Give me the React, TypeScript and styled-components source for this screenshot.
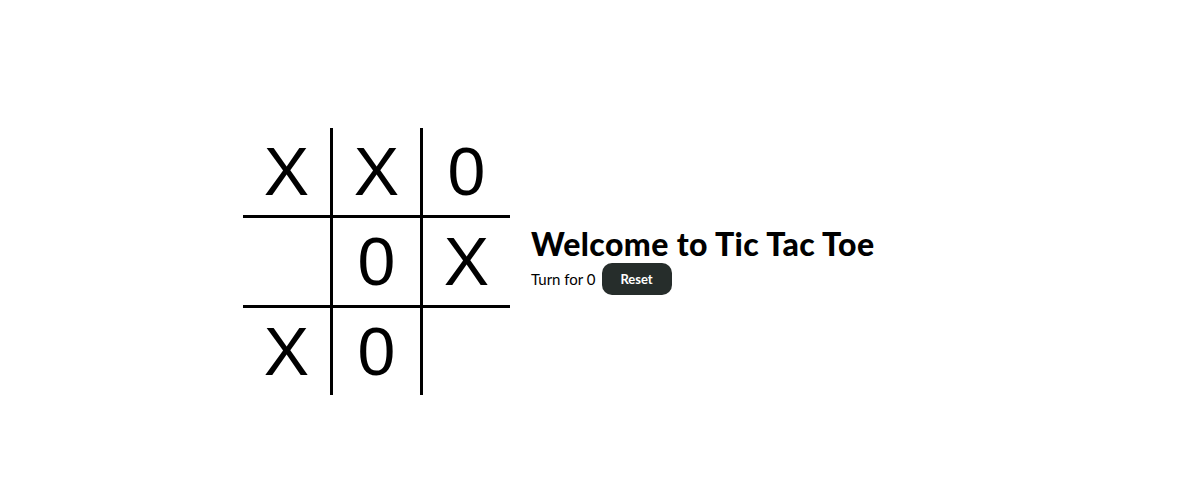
import React, { useState } from "react";
import styled, { createGlobalStyle } from "styled-components";

const GlobalStyle = createGlobalStyle`
    body {
        margin: 0;
        background: #fff;
        font-family: "Lato", "Noto Sans", sans-serif;
    }
`

const inicial = ["X", "X", "0", "", "0", "X", "X", "0", ""];

const App = () => {
    const [casillas, setCasillas] = useState<string[]>(inicial);
    const [turno, setTurno] = useState<string>("0");

    const jugar = (i: number) => {
        if (casillas[i]) return;
        const nuevas = [...casillas];
        nuevas[i] = turno;
        setCasillas(nuevas);
        setTurno(turno === "X" ? "0" : "X");
    }

    return (
        <>
            <GlobalStyle />
            <Pagina>
                <Tablero>
                    {casillas.map((valor, i) => (
                        <Casilla key={i} $col={i % 3} $fila={Math.floor(i / 3)} onClick={() => jugar(i)}>
                            {valor}
                        </Casilla>
                    ))}
                </Tablero>
                <Panel>
                    <Titulo>Welcome to Tic Tac Toe</Titulo>
                    <Fila>
                        <Turno>Turn for {turno}</Turno>
                        <BotonReset onClick={() => { setCasillas(Array(9).fill("")); setTurno("X"); }}>Reset</BotonReset>
                    </Fila>
                </Panel>
            </Pagina>
        </>
    )
}

export default App;

const Pagina = styled.div`
    display: flex;
    align-items: center;
    height: 522px;
    padding-left: 243px;
    box-sizing: border-box;
`

const Tablero = styled.div`
    display: grid;
    grid-template-columns: 90px 90px 87px;
    grid-template-rows: 90px 90px 87px;
`

const Casilla = styled.div<{ $col: number; $fila: number }>`
    display: flex;
    justify-content: center;
    align-items: center;
    box-sizing: border-box;
    font-family: "Liberation Sans", Arial, sans-serif;
    font-size: 68px;
    line-height: 1.15;
    color: #000;
    cursor: pointer;
    border-right: ${(p) => (p.$col < 2 ? "3px solid #000" : "none")};
    border-bottom: ${(p) => (p.$fila < 2 ? "3px solid #000" : "none")};
`

const Panel = styled.div`
    display: flex;
    flex-direction: column;
    margin-left: 21px;
`

const Titulo = styled.h1`
    margin: 0;
    font-size: 32px;
    font-weight: 900;
    letter-spacing: 0.4px;
    color: #000;
    line-height: 34px;
`

const Fila = styled.div`
    display: flex;
    align-items: center;
    gap: 6px;
    margin-top: 2px;
`

const Turno = styled.span`
    font-size: 15px;
    color: #000;
`

const BotonReset = styled.button`
    width: 70px;
    height: 32px;
    border: none;
    border-radius: 10px;
    background: #262d2b;
    color: #fff;
    font-family: "Lato", sans-serif;
    font-size: 13px;
    font-weight: 700;
    cursor: pointer;
`
